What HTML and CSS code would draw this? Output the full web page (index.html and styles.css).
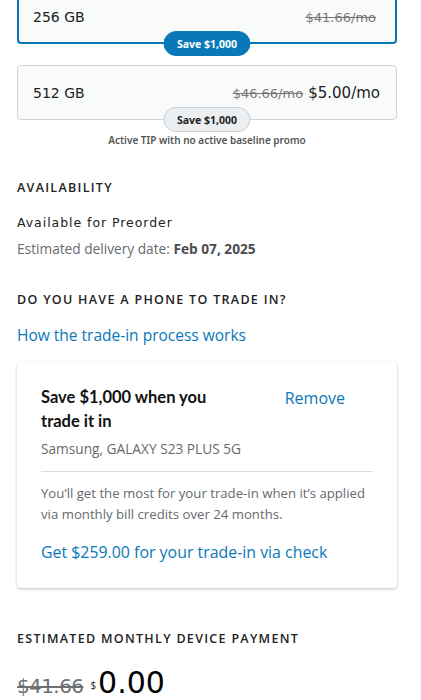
FILE: index.html
```html
<!DOCTYPE html>
<html lang="en">
<head>
  <meta charset="UTF-8" />
  <title>Device options</title>
  <meta name="viewport" content="width=device-width, initial-scale=1.0" />
  <link rel="stylesheet" href="styles.css">
</head>
<body>
  <div class="page">
    <div class="options">
      <div class="option selected">
        <span class="size">256 GB</span>
        <span class="price"><s>$41.66/mo</s></span>
        <span class="badge">Save $1,000</span>
      </div>
      <div class="option">
        <span class="size">512 GB</span>
        <span class="price"><s>$46.66/mo</s> <span class="now">$5.00/mo</span></span>
        <span class="badge">Save $1,000</span>
      </div>
      <p class="note">Active TIP with no active baseline promo</p>
    </div>

    <section class="block">
      <h3>AVAILABILITY</h3>
      <p class="avail">Available for Preorder</p>
      <p class="delivery">Estimated delivery date: <b>Feb 07, 2025</b></p>
    </section>

    <section class="block trade">
      <h3>DO YOU HAVE A PHONE TO TRADE IN?</h3>
      <a class="link" href="#">How the trade-in process works</a>

      <div class="trade-card">
        <div class="trade-head">
          <h4>Save $1,000 when you trade it in</h4>
          <a class="link remove" href="#">Remove</a>
        </div>
        <p class="device">Samsung, GALAXY S23 PLUS 5G</p>
        <hr>
        <p class="info">You’ll get the most for your trade-in when it’s applied via monthly bill credits over 24 months.</p>
        <a class="link check" href="#">Get $259.00 for your trade-in via check</a>
      </div>
    </section>

    <section class="block payment">
      <h3>ESTIMATED MONTHLY DEVICE PAYMENT</h3>
      <div class="amount">
        <s class="old">$41.66</s>
        <sup class="cur">$</sup><span class="big">0.00</span>
      </div>
    </section>
  </div>
</body>
</html>
```

FILE: styles.css
```css
:root {
  --blue: #0a78b8;
  --text: #1d1d1f;
  --grey: #666a70;
  --line: #cfd3d8;
}

body {
  margin: 0;
  padding: 0;
  font-family: 'Open Sans', sans-serif;
  color: var(--text);
  background: #fff;
}

.page {
  width: 380px;
  margin: -11px 0 0 17px;
}

.options {
  display: flex;
  flex-direction: column;
  gap: 21px;
}

.option {
  position: relative;
  height: 55px;
  box-sizing: border-box;
  display: flex;
  justify-content: space-between;
  align-items: center;
  padding: 0 16px 0 15px;
  border: 1px solid var(--line);
  border-radius: 4px;
  background: #f9fafa;
  font-family: 'DejaVu Sans', sans-serif;
}

.option.selected {
  border: 2px solid var(--blue);
  padding: 0 19px 0 14px;
}

.size {
  font-size: 14px;
  color: #222;
}

.price s {
  font-size: 13px;
  color: #777;
}

.price .now {
  font-size: 15px;
  color: #222;
}

.badge {
  position: absolute;
  left: 50%;
  bottom: -13px;
  transform: translateX(-50%);
  width: 87px;
  height: 25px;
  box-sizing: border-box;
  display: flex;
  align-items: center;
  justify-content: center;
  border-radius: 13px;
  border: 1px solid #c9ced4;
  background: #eceff2;
  font-family: 'Noto Sans', sans-serif;
  font-size: 10.5px;
  font-weight: 700;
  color: #222;
}

.selected .badge {
  background: var(--blue);
  border-color: var(--blue);
  color: #fff;
  bottom: -14px;
}

.note {
  margin: -8px 0 0;
  text-align: center;
  font-family: 'Noto Sans', sans-serif;
  font-size: 10px;
  font-weight: 600;
  color: #555;
}

.block {
  margin-top: 33px;
}

h3 {
  margin: 0;
  font-family: 'Open Sans', sans-serif;
  font-size: 12.5px;
  font-weight: 600;
  line-height: 16px;
  letter-spacing: 1.3px;
  color: #222;
}

.avail {
  margin: 19px 0 0;
  font-family: 'DejaVu Sans', sans-serif;
  font-size: 12.5px;
  letter-spacing: 0.95px;
  color: #222;
}

.delivery {
  margin: 9px 0 0;
  font-size: 13.7px;
  color: var(--grey);
}

.delivery b {
  color: #4a4d52;
}

.link {
  display: block;
  color: var(--blue);
  text-decoration: none;
  font-size: 15.5px;
  font-weight: 500;
  line-height: 20px;
}

.block.trade {
  margin-top: 34px;
}

.block .link {
  margin-top: 17px;
}

.trade-card {
  margin-top: 17px;
  padding: 23px 24px 25px;
  border-radius: 4px;
  background: #fff;
  box-shadow: 0 1px 3px rgba(0, 0, 0, 0.25);
}

.trade-head {
  display: flex;
  justify-content: space-between;
  align-items: flex-start;
}

.trade-head h4 {
  margin: 0;
  width: 200px;
  font-family: 'Lato', sans-serif;
  font-size: 16.5px;
  font-weight: 700;
  line-height: 24px;
  color: #111;
}

.block .remove {
  margin: 3px 28px 0 0;
  font-size: 16px;
}

.device {
  margin: 7px 0 0;
  font-size: 13.7px;
  line-height: 18px;
  color: var(--grey);
}

hr {
  margin: 13px 0 0;
  border: none;
  border-top: 1px solid #d8dce0;
}

.info {
  margin: 11px 0 0;
  font-size: 13.2px;
  line-height: 21px;
  color: var(--grey);
}

.block .check {
  margin-top: 16px;
  font-size: 15.9px;
  line-height: 22px;
}

.block.payment {
  margin-top: 43px;
}

.amount {
  margin-top: 18px;
  display: flex;
  align-items: baseline;
  line-height: 36px;
}

.old {
  font-family: 'DejaVu Sans', sans-serif;
  font-size: 20px;
  letter-spacing: -0.6px;
  color: #6c6f73;
}

.cur {
  margin-left: 7px;
  font-size: 10px;
  line-height: 10px;
  align-self: center;
}

.big {
  margin-left: 2px;
  font-family: 'DejaVu Sans', sans-serif;
  font-size: 30px;
  color: #000;
}
```
